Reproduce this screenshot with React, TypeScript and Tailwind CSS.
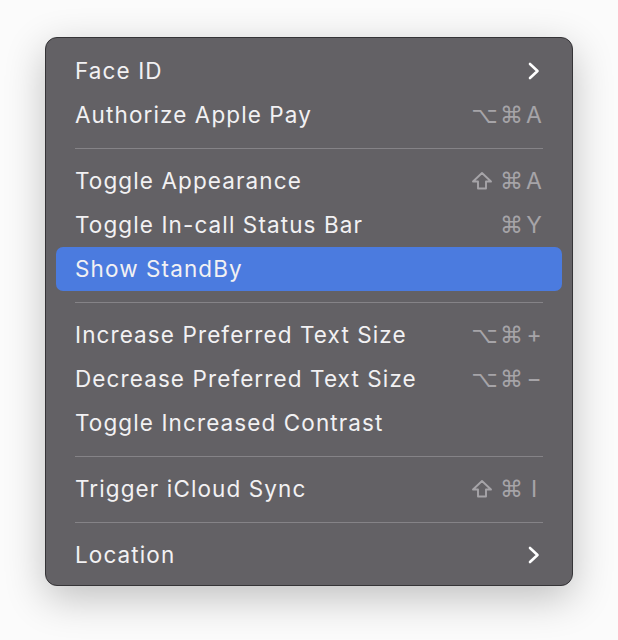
import { ReactNode } from 'react'

type Item =
  | { kind: 'row'; label: string; keys?: string[]; submenu?: boolean; active?: boolean }
  | { kind: 'sep' }

const items: Item[] = [
  { kind: 'row', label: 'Face ID', submenu: true },
  { kind: 'row', label: 'Authorize Apple Pay', keys: ['⌥', '⌘', 'A'] },
  { kind: 'sep' },
  { kind: 'row', label: 'Toggle Appearance', keys: ['shift', '⌘', 'A'] },
  { kind: 'row', label: 'Toggle In-call Status Bar', keys: ['', '⌘', 'Y'] },
  { kind: 'row', label: 'Show StandBy', active: true },
  { kind: 'sep' },
  { kind: 'row', label: 'Increase Preferred Text Size', keys: ['⌥', '⌘', '+'] },
  { kind: 'row', label: 'Decrease Preferred Text Size', keys: ['⌥', '⌘', '−'] },
  { kind: 'row', label: 'Toggle Increased Contrast' },
  { kind: 'sep' },
  { kind: 'row', label: 'Trigger iCloud Sync', keys: ['shift', '⌘', 'I'] },
  { kind: 'sep' },
  { kind: 'row', label: 'Location', submenu: true },
]

function Chevron() {
  return (
    <svg width="14" height="18" viewBox="0 0 14 18" className="mr-[2px]">
      <path
        d="M3 2 L10.5 9 L3 16"
        fill="none"
        stroke="#ffffff"
        strokeWidth="2.6"
        strokeLinecap="round"
        strokeLinejoin="round"
      />
    </svg>
  )
}

function ShiftGlyph() {
  return (
    <svg width="22" height="20" viewBox="0 0 22 20">
      <path
        d="M11 2 L20 10.5 L15 10.5 L15 17.5 L7 17.5 L7 10.5 L2 10.5 Z"
        fill="none"
        stroke="#a6a4a8"
        strokeWidth="1.9"
        strokeLinejoin="round"
      />
    </svg>
  )
}

function Shortcut({ keys }: { keys: string[] }) {
  return (
    <div className="flex items-center text-[#a6a4a8]">
      {keys.map((k, i): ReactNode =>
        k === 'shift' ? (
          <span key={i} className="flex w-[27px] justify-start">
            <ShiftGlyph />
          </span>
        ) : (
          <span
            key={i}
            className={
              i === 2
                ? 'w-[18px] text-center text-[23px]'
                : "w-[27px] text-center font-['DejaVu_Sans',sans-serif] text-[23px]"
            }
          >
            {k}
          </span>
        )
      )}
    </div>
  )
}

export default function App() {
  return (
    <div className="min-h-[640px] w-full bg-[#fbfbfb] pt-[37px] pl-[45px] font-['Inter',sans-serif]">
      <div className="w-[528px] rounded-[12px] border border-[#353437] bg-[#636165] px-[10px] pt-[11px] pb-[8px] shadow-[0_12px_40px_rgba(0,0,0,0.24)]">
        {items.map((item, i) =>
          item.kind === 'sep' ? (
            <div key={i} className="flex h-[22px] items-center px-[19px]">
              <div className="h-px w-full bg-[#858387]" />
            </div>
          ) : (
            <div
              key={i}
              className={
                item.active
                  ? 'flex h-[44px] items-center justify-between rounded-[7px] bg-[#4b7bdf] px-[19px]'
                  : 'flex h-[44px] items-center justify-between px-[19px]'
              }
            >
              <span className="text-[22.5px] tracking-[1.1px] text-[#f2f1f3]">{item.label}</span>
              {item.keys && <Shortcut keys={item.keys} />}
              {item.submenu && <Chevron />}
            </div>
          )
        )}
      </div>
    </div>
  )
}
